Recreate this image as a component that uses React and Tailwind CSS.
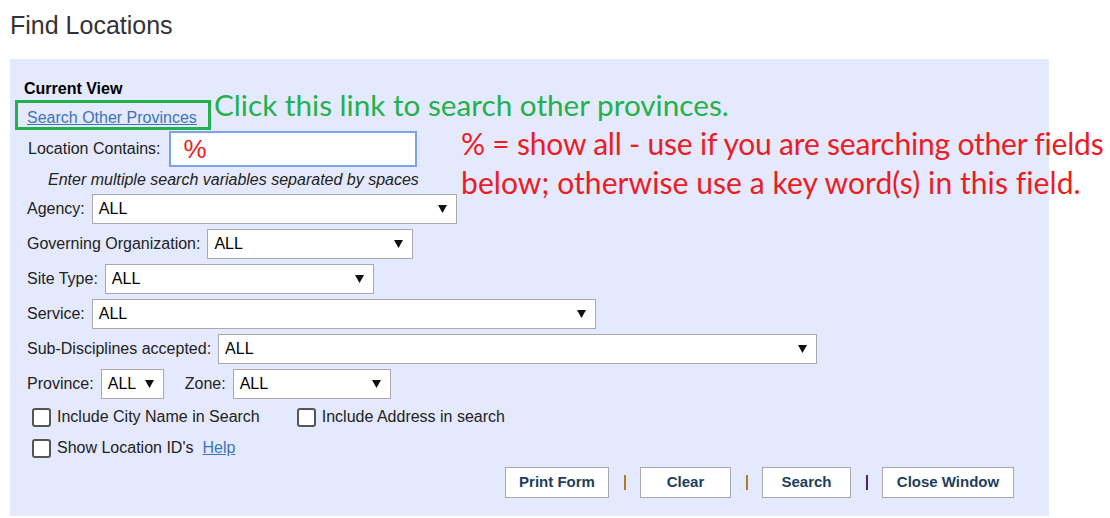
import { useState } from 'react'

const arial = { fontFamily: '"Liberation Sans", Arial, sans-serif' }
const note = { fontFamily: 'Lato, "Open Sans", sans-serif' }

function Arrow() {
  return (
    <svg width="9" height="8" viewBox="0 0 9 8" className="shrink-0">
      <polygon points="0,0 9,0 4.5,8" fill="#111" />
    </svg>
  )
}

function Select({ width, value = 'ALL' }) {
  return (
    <div
      className="flex h-[30px] items-center justify-between border border-[#a9a9a9] bg-white pl-[6px] pr-[9px] text-[16px] text-black"
      style={{ width }}
    >
      <span>{value}</span>
      <Arrow />
    </div>
  )
}

function Field({ label, width }) {
  return (
    <div className="flex items-center gap-[7px] pl-[3px]">
      <span className="text-[16px] text-[#222]">{label}</span>
      <Select width={width} />
    </div>
  )
}

function Checkbox({ label }) {
  const [on, setOn] = useState(false)
  return (
    <label className="flex cursor-pointer items-center gap-[6px]">
      <span
        onClick={() => setOn(!on)}
        className="flex h-[19px] w-[19px] items-center justify-center rounded-[3px] border-2 border-[#555] bg-white text-[12px]"
      >
        {on ? '✓' : ''}
      </span>
      <span className="text-[16px] text-[#222]">{label}</span>
    </label>
  )
}

function Button({ children, width }) {
  return (
    <button
      className="h-[31px] border border-[#a9a9a9] bg-white text-[15px] font-bold text-[#1d3e5c]"
      style={{ width }}
    >
      {children}
    </button>
  )
}

function Pipe({ color }) {
  return <span className={`ml-[15px] mr-[14px] inline-block h-[15px] w-[2px] ${color}`} />
}

export default function App() {
  return (
    <div className="relative h-[518px] w-[1110px] overflow-hidden bg-white" style={arial}>
      <h1 className="pl-[10px] pt-[11px] text-[25px] leading-[29px] text-[#333]">Find Locations</h1>

      <div className="ml-[10px] mt-[19px] flex h-[457px] w-[1039px] flex-col bg-[#e4e9fd] pl-[14px] pt-[21px]">
        <div className="text-[16px] font-bold leading-[18px] text-black">Current View</div>

        <div className="-ml-[9px] mt-[2px] h-[30px] w-[196px] border-[3px] border-[#22b14c] pl-[9px] pt-[6px] text-[16px] leading-[17px]">
          <a href="#" className="text-[#3d74b9] underline">Search Other Provinces</a>
        </div>

        <div className="mt-[1px] flex items-center gap-[8px] pl-[4px]">
          <span className="text-[16px] text-[#222]">Location Contains:</span>
          <div className="flex h-[36px] w-[248px] items-center border-2 border-[#7ba3e8] bg-white pl-[13px] text-[26px] text-[#ed1c24]">
            %
          </div>
        </div>

        <div className="mt-[4px] pl-[24px] text-[16px] italic leading-[18px] text-[#222]">
          Enter multiple search variables separated by spaces
        </div>

        <div className="mt-[5px] flex flex-col gap-[5px]">
          <Field label="Agency:" width={365} />
          <Field label="Governing Organization:" width={206} />
          <Field label="Site Type:" width={269} />
          <Field label="Service:" width={504} />
          <Field label="Sub-Disciplines accepted:" width={599} />
          <div className="flex items-center pl-[3px]">
            <span className="mr-[7px] text-[16px] text-[#222]">Province:</span>
            <Select width={63} />
            <span className="ml-[21px] mr-[7px] text-[16px] text-[#222]">Zone:</span>
            <Select width={158} />
          </div>
        </div>

        <div className="mt-[6px] flex items-center pl-[8px]">
          <Checkbox label="Include City Name in Search" />
          <div className="ml-[37px]">
            <Checkbox label="Include Address in search" />
          </div>
        </div>

        <div className="mt-[7px] flex items-center pl-[8px]">
          <Checkbox label="Show Location ID's" />
          <a href="#" className="ml-[9px] text-[16px] text-[#3d74b9] underline">Help</a>
        </div>

        <div className="mt-[7px] flex items-center pl-[481px]">
          <Button width={104}>Print Form</Button>
          <Pipe color="bg-[#b07a2a]" />
          <Button width={91}>Clear</Button>
          <Pipe color="bg-[#b07a2a]" />
          <Button width={89}>Search</Button>
          <Pipe color="bg-[#4b2475]" />
          <Button width={132}>Close Window</Button>
        </div>
      </div>

      <div
        className="absolute left-[214px] top-[86px] whitespace-nowrap text-[29.7px] leading-[38px] text-[#22b14c]"
        style={note}
      >
        Click this link to search other provinces.
      </div>
      <div
        className="absolute left-[461px] top-[124px] whitespace-nowrap text-[30px] leading-[39px] text-[#ed1c24]"
        style={note}
      >
        <div className="tracking-[-0.2px]">% = show all - use if you are searching other fields</div>
        <div className="tracking-[0.08px]">below; otherwise use a key word(s) in this field.</div>
      </div>
    </div>
  )
}
